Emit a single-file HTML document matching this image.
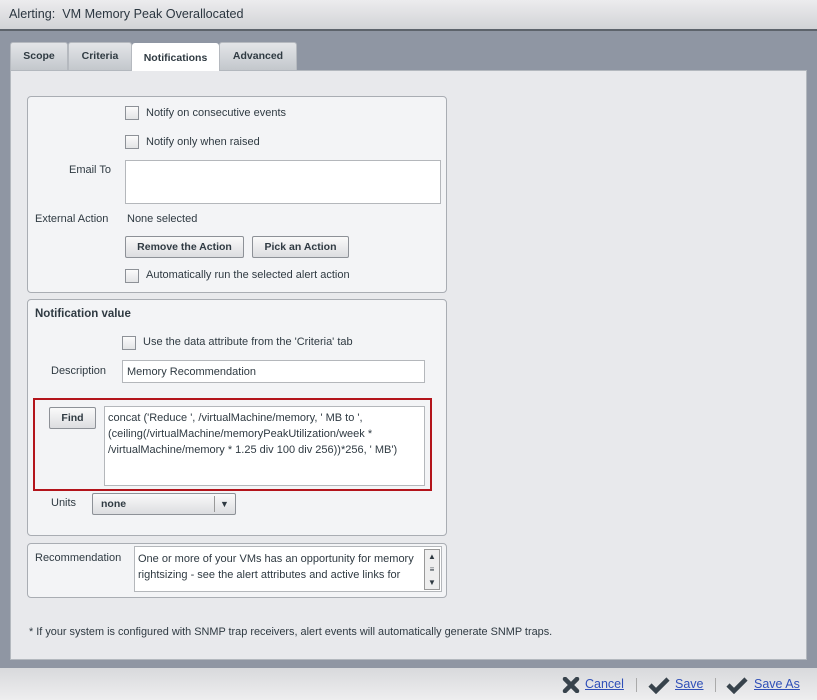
<!DOCTYPE html>
<html><head><style>
*{box-sizing:border-box;margin:0;padding:0}
body{width:817px;height:700px;position:relative;overflow:hidden;background:#8f96a3;font-family:"Liberation Sans",sans-serif;font-size:11px;color:#2f3a42}
.a{position:absolute}
.hdr{left:0;top:0;width:817px;background:linear-gradient(#ececee,#d2d3d6);border-bottom:2px solid #5d636b;height:31px}
.hdr span{position:absolute;left:9px;top:7px;font-size:12.6px;color:#2b3640}
.tab{top:42px;height:28px;background:linear-gradient(#e3e5e8,#c3c7cc);border:1px solid #b5b9bf;border-bottom:none;border-radius:3px 3px 0 0;font-weight:bold;font-size:10.5px;text-align:center;line-height:27px;color:#2f3a42}
.panel{left:10px;top:70px;width:797px;height:590px;background:#e8e9ec;border:1px solid #b3b8be}
.box{background:#f3f4f6;border:1px solid #a9adb3;border-radius:4px}
.cb{width:14px;height:14px;border:1px solid #8d9197;background:linear-gradient(#fbfbfb,#e3e4e6)}
.inp{background:#fff;border:1px solid #b4b7bb}
.btn{height:22px;border:1px solid #8d9197;border-radius:2px;background:linear-gradient(#fafafa,#dcdde0);font-weight:bold;font-size:10.5px;text-align:center;line-height:20px}
.ftr{left:0;top:668px;width:817px;height:32px;background:linear-gradient(#d8d9dc,#eeeeef)}
.lk{color:#2f4fb8;text-decoration:underline;font-size:12.5px;top:677px}
</style></head><body>
<div class="a hdr"><span>Alerting:&nbsp; VM Memory Peak Overallocated</span></div>
<div class="a panel"></div>
<div class="a tab" style="left:10px;width:58px">Scope</div>
<div class="a tab" style="left:68px;width:64px">Criteria</div>
<div class="a tab" style="left:132px;width:87px;background:#fff;border-color:#fff;top:43px;height:28px;line-height:28px">Notifications</div>
<div class="a tab" style="left:219px;width:78px">Advanced</div>

<div class="a box" style="left:27px;top:96px;width:420px;height:197px"></div>
<div class="a cb" style="left:125px;top:106px"></div><div class="a" style="left:146px;top:107px">Notify on consecutive events</div>
<div class="a cb" style="left:125px;top:135px"></div><div class="a" style="left:146px;top:136px">Notify only when raised</div>
<div class="a" style="left:69px;top:164px">Email To</div>
<div class="a inp" style="left:125px;top:160px;width:316px;height:44px"></div>
<div class="a" style="left:35px;top:213px">External Action</div>
<div class="a" style="left:127px;top:213px">None selected</div>
<div class="a btn" style="left:125px;top:236px;width:119px">Remove the Action</div>
<div class="a btn" style="left:252px;top:236px;width:97px">Pick an Action</div>
<div class="a cb" style="left:125px;top:269px"></div><div class="a" style="left:146px;top:269px">Automatically run the selected alert action</div>

<div class="a box" style="left:27px;top:299px;width:420px;height:237px"></div>
<div class="a" style="left:35px;top:308px;font-weight:bold;font-size:11.5px">Notification value</div>
<div class="a cb" style="left:122px;top:336px"></div><div class="a" style="left:143px;top:336px">Use the data attribute from the 'Criteria' tab</div>
<div class="a" style="left:51px;top:365px">Description</div>
<div class="a inp" style="left:122px;top:360px;width:303px;height:23px;padding:5px 0 0 4px">Memory Recommendation</div>
<div class="a" style="left:33px;top:398px;width:399px;height:93px;border:2px solid #b3141b"></div>
<div class="a btn" style="left:49px;top:407px;width:47px">Find</div>
<div class="a inp" style="left:104px;top:406px;width:321px;height:80px;padding:3px 0 0 3px;line-height:16px">concat ('Reduce ', /virtualMachine/memory, ' MB to ',<br>(ceiling(/virtualMachine/memoryPeakUtilization/week *<br>/virtualMachine/memory * 1.25 div 100 div 256))*256, ' MB')</div>
<div class="a" style="left:51px;top:497px">Units</div>
<div class="a btn" style="left:92px;top:493px;width:144px;text-align:left;padding-left:8px;line-height:20px">none<span style="position:absolute;left:121px;top:2px;height:16px;border-left:1px solid #999"></span><span style="position:absolute;left:127px;top:0;font-size:9px">▼</span></div>

<div class="a box" style="left:27px;top:543px;width:420px;height:55px"></div>
<div class="a" style="left:35px;top:552px">Recommendation</div>
<div class="a inp" style="left:134px;top:546px;width:308px;height:46px;padding:4px 0 0 3px;line-height:16px;font-size:11px">One or more of your VMs has an opportunity for memory<br>rightsizing - see the alert attributes and active links for</div>
<div class="a" style="left:424px;top:549px;width:16px;height:41px;background:#eee;border:1px solid #999;font-size:8px;text-align:center;line-height:13px">▲<br>≡<br>▼</div>

<div class="a" style="left:29px;top:626px;font-size:10.9px">* If your system is configured with SNMP trap receivers, alert events will automatically generate SNMP traps.</div>

<div class="a ftr"></div>
<svg class="a" style="left:562px;top:677px" width="18" height="16" viewBox="0 0 18 16"><path d="M3 2L15 14M15 2L3 14" stroke="#38434c" stroke-width="4.5" stroke-linecap="round"/></svg>
<div class="a lk" style="left:585px">Cancel</div>
<div class="a" style="left:636px;top:678px;width:1px;height:14px;background:#aaa"></div>
<svg class="a" style="left:648px;top:676px" width="22" height="18" viewBox="0 0 22 18"><path d="M2 9L8 15L20 3" stroke="#38434c" stroke-width="4.5" fill="none"/></svg>
<div class="a lk" style="left:675px">Save</div>
<div class="a" style="left:715px;top:678px;width:1px;height:14px;background:#aaa"></div>
<svg class="a" style="left:726px;top:676px" width="22" height="18" viewBox="0 0 22 18"><path d="M2 9L8 15L20 3" stroke="#38434c" stroke-width="4.5" fill="none"/></svg>
<div class="a lk" style="left:754px">Save As</div>
</body></html>
